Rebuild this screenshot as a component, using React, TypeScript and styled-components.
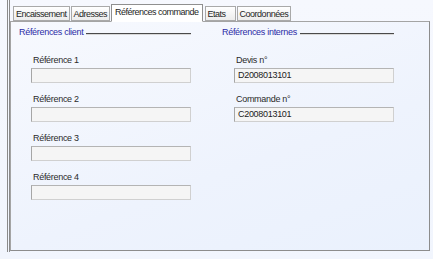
import styled, { createGlobalStyle } from 'styled-components';

const GlobalStyle = createGlobalStyle`
  body {
    margin: 0;
    font-family: 'Liberation Sans', Arial, sans-serif;
    font-size: 9px;
    letter-spacing: -0.3px;
    color: #1e1e1e;
  }
`;

const TABS = [
  { label: 'Encaissement' },
  { label: 'Adresses' },
  { label: 'Références commande', active: true },
  { label: 'Etats', minWidth: 31 },
  { label: 'Coordonnées' },
];

const CLIENT_REFS = ['Référence 1', 'Référence 2', 'Référence 3', 'Référence 4'];
const INTERNAL_REFS = [
  { label: 'Devis n°', value: 'D2008013101' },
  { label: 'Commande n°', value: 'C2008013101' },
];

const App = () => {
  return (
    <Window>
      <GlobalStyle />
      <Frame>
        <TabStrip>
          {TABS.map((tab) => (
            <Tab key={tab.label} $active={tab.active} $minWidth={tab.minWidth}>
              {tab.label}
            </Tab>
          ))}
        </TabStrip>
        <Panel>
          <Section>
            <Heading>
              <span>Références client</span>
              <HeadingRule />
            </Heading>
            <Fields>
              {CLIENT_REFS.map((label) => (
                <Field key={label}>
                  <Label>{label}</Label>
                  <Input />
                </Field>
              ))}
            </Fields>
          </Section>
          <Section>
            <Heading>
              <span>Références internes</span>
              <HeadingRule />
            </Heading>
            <Fields>
              {INTERNAL_REFS.map((f) => (
                <Field key={f.label}>
                  <Label>{f.label}</Label>
                  <Input>{f.value}</Input>
                </Field>
              ))}
            </Fields>
          </Section>
        </Panel>
      </Frame>
    </Window>
  );
};

const Window = styled.div`
  width: 433px;
  height: 259px;
  box-sizing: border-box;
  padding: 0 0 0 7px;
  background: linear-gradient(180deg, #f6f8fe 0%, #f1f5fd 100%);
  overflow: hidden;
`;

const Frame = styled.div`
  height: 252px;
  border-left: 3px double #8a8a8a;
  display: flex;
  flex-direction: column;
`;

const TabStrip = styled.div`
  display: flex;
  align-items: flex-end;
  padding: 4px 0 0 3px;
  height: 17px;
  position: relative;
  z-index: 1;
`;

const Tab = styled.div<{ $active?: boolean; $minWidth?: number }>`
  box-sizing: border-box;
  min-width: ${(p) => (p.$minWidth ? `${p.$minWidth}px` : 'auto')};
  height: ${(p) => (p.$active ? '18px' : '15px')};
  margin-bottom: ${(p) => (p.$active ? '-1px' : '0')};
  margin-right: ${(p) => (p.$active ? '2px' : '1px')};
  padding: ${(p) => (p.$active ? '0 3px 2px' : '0 2px')};
  display: flex;
  align-items: center;
  border: 1px solid ${(p) => (p.$active ? '#8f8f8f' : '#a9a9a9')};
  border-bottom: ${(p) => (p.$active ? '1px solid #ffffff' : '1px solid #a9a9a9')};
  background: ${(p) => (p.$active ? '#ffffff' : 'linear-gradient(180deg, #ffffff 0%, #ececec 100%)')};
  white-space: nowrap;
  letter-spacing: -0.5px;
`;

const Panel = styled.div`
  box-sizing: border-box;
  width: 420px;
  height: 230px;
  border: 1px solid #a4a4a4;
  border-right-color: #8c8c8c;
  border-bottom-color: #8c8c8c;
  background: linear-gradient(160deg, #f7f9fe 0%, #eef3fd 60%, #eaf1fd 100%);
  display: grid;
  grid-template-columns: 203px 1fr;
  padding: 4px 0 0 8px;
`;

const Section = styled.div`
  display: flex;
  flex-direction: column;
`;

const Heading = styled.div`
  display: flex;
  align-items: center;
  gap: 3px;
  width: 172px;
  height: 12px;
  color: #2b2ba6;
  white-space: nowrap;
`;

const HeadingRule = styled.div`
  flex: 1;
  height: 1px;
  margin-top: 3px;
  background: #4a4a4a;
  border-bottom: 1px solid #d8d8d8;
`;

const Fields = styled.div`
  display: flex;
  flex-direction: column;
  gap: 10px;
  padding: 16px 0 0 12px;
`;

const Field = styled.div`
  display: flex;
  flex-direction: column;
  gap: 2px;
`;

const Label = styled.div`
  height: 12px;
  line-height: 12px;
  padding-left: 2px;
  color: #2a2a2a;
`;

const Input = styled.div`
  box-sizing: border-box;
  width: 160px;
  height: 15px;
  line-height: 13px;
  padding-left: 3px;
  border: 1px solid #d0d0d0;
  border-top-color: #b4b4b4;
  border-left-color: #a6a6a6;
  background: #f5f5f5;
  color: #222;
`;

export default App;
